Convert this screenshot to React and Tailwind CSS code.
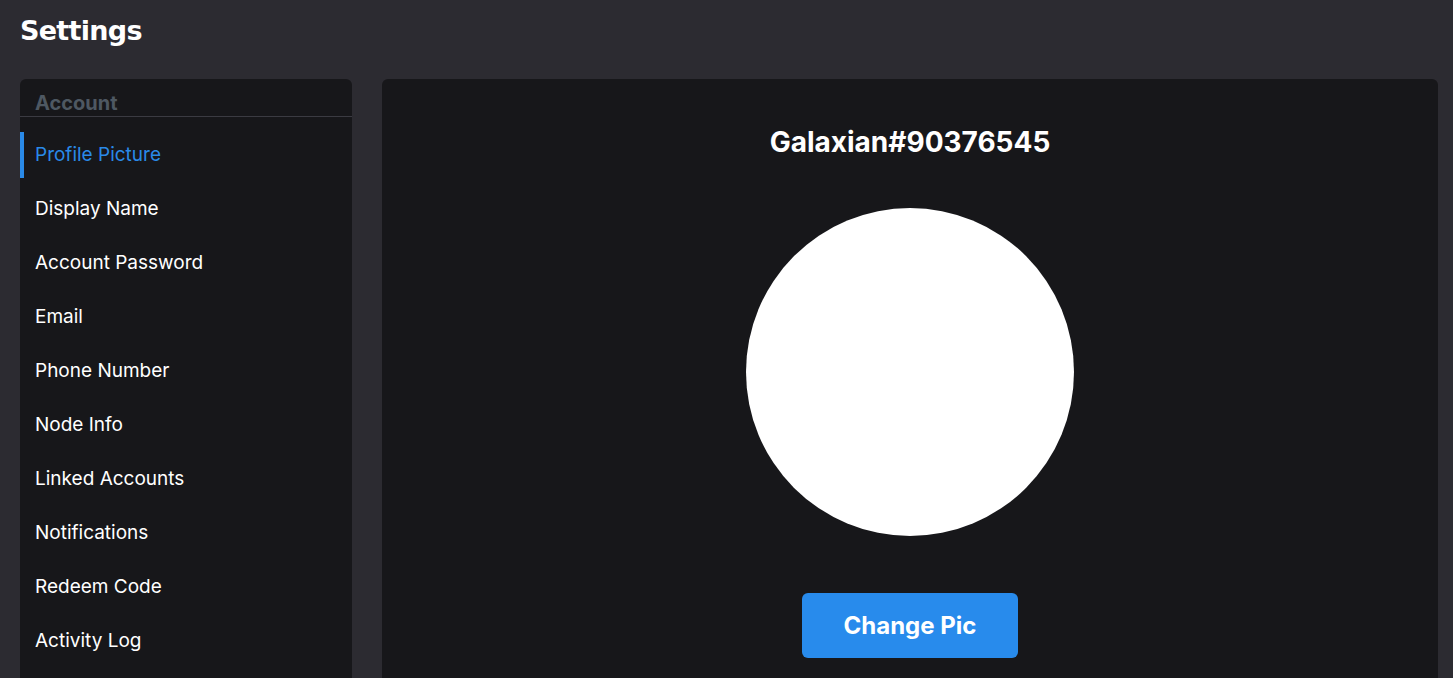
import React from 'react';

const items = [
  'Profile Picture',
  'Display Name',
  'Account Password',
  'Email',
  'Phone Number',
  'Node Info',
  'Linked Accounts',
  'Notifications',
  'Redeem Code',
  'Activity Log',
];

export default function App() {
  return (
    <div className="h-[678px] overflow-hidden bg-[#2c2b31] pl-5 pr-[15px] pt-[13px] font-['Inter',sans-serif] text-white">
      <h1 className="h-[66px] font-['DejaVu_Sans',sans-serif] text-[27px] font-black leading-[36px] tracking-[-0.7px]">
        Settings
      </h1>
      <div className="flex gap-[30px]">
        <aside className="h-[620px] w-[332px] shrink-0 rounded-md bg-[#17171a]">
          <div className="border-b border-[#3b3b42] px-[15px] pt-[12px] pb-[1px] text-[20px] font-bold leading-[24px] text-[#4e5862]">
            Account
          </div>
          <nav className="mt-[15px] flex flex-col gap-2">
            {items.map((label, i) => (
              <div
                key={label}
                className={
                  i === 0
                    ? 'flex h-[46px] items-center border-l-4 border-[#2a8ae8] pl-[11px] text-[19px] text-[#2a8ae8]'
                    : 'flex h-[46px] items-center pl-[15px] text-[19px] text-white'
                }
              >
                {label}
              </div>
            ))}
          </nav>
        </aside>
        <main className="flex h-[620px] flex-1 flex-col items-center rounded-md bg-[#17171a]">
          <h2 className="mt-[45px] text-[28px] font-bold leading-[36px]">Galaxian#90376545</h2>
          <div className="mt-[48px] h-[328px] w-[328px] rounded-full bg-white"></div>
          <button className="mt-[57px] h-[65px] w-[216px] rounded-md bg-[#288bec] text-[24px] font-bold text-white">
            Change Pic
          </button>
        </main>
      </div>
    </div>
  );
}
